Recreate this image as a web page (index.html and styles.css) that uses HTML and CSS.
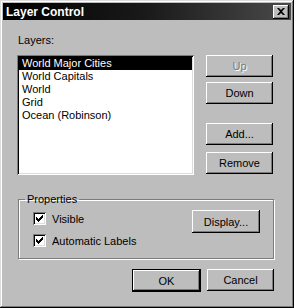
FILE: index.html
```html
<!DOCTYPE html>
<html lang="en">
<head>
    <meta charset="UTF-8">
    <title>Layer Control</title>
    <link rel="stylesheet" href="styles.css">
</head>
<body>
    <div class="window">
        <div class="titlebar">
            <span class="title">Layer Control</span>
            <button class="close" type="button">
                <svg width="8" height="7" viewBox="0 0 8 7"><path d="M0 0h2l2 2 2-2h2L5 3.5 8 7H6L4 5 2 7H0l3-3.5z" fill="#000"/></svg>
            </button>
        </div>

        <div class="content">
            <div class="label">Layers:</div>
            <div class="layers-row">
                <ul class="listbox">
                    <li class="selected">World Major Cities</li>
                    <li>World Capitals</li>
                    <li>World</li>
                    <li>Grid</li>
                    <li>Ocean (Robinson)</li>
                </ul>
                <div class="side-buttons">
                    <button class="btn" disabled>Up</button>
                    <button class="btn">Down</button>
                    <button class="btn add">Add...</button>
                    <button class="btn remove">Remove</button>
                </div>
            </div>

            <fieldset class="group">
                <legend>Properties</legend>
                <div class="group-body">
                    <div class="checks">
                        <label class="check"><span class="box"><svg width="7" height="7" viewBox="0 0 7 7"><path d="M0 2h1v1h1v1h1V3h1V2h1V1h1V0h1v3H6v1H5v1H4v1H3v1H2V6H1V5H0z" fill="#000"/></svg></span>Visible</label>
                        <label class="check"><span class="box"><svg width="7" height="7" viewBox="0 0 7 7"><path d="M0 2h1v1h1v1h1V3h1V2h1V1h1V0h1v3H6v1H5v1H4v1H3v1H2V6H1V5H0z" fill="#000"/></svg></span>Automatic Labels</label>
                    </div>
                    <button class="btn display">Display...</button>
                </div>
            </fieldset>

            <div class="footer">
                <button class="btn default">OK</button>
                <button class="btn">Cancel</button>
            </div>
        </div>
    </div>
</body>
</html>
```

FILE: styles.css
```css
body {
    margin: 0;
    background: #bdbdbd;
    font-family: 'Liberation Sans', Arial, sans-serif;
    font-size: 11px;
    color: #000;
}
.window {
    width: 294px;
    height: 308px;
    box-sizing: border-box;
    background: #bdbdbd;
    padding: 3px;
    box-shadow: inset -1px -1px #000, inset 1px 1px #dcdcdc,
                inset -2px -2px #7b7b7b, inset 2px 2px #fff;
}
.titlebar {
    height: 17px;
    background: linear-gradient(to right, #000 0%, #1a1a1a 50%, #4a4a4a 100%);
    display: flex;
    align-items: center;
    justify-content: space-between;
    padding: 0 2px 0 3px;
}
.title {
    color: #fff;
    font-weight: bold;
    font-size: 12px;
}
.close {
    width: 16px;
    height: 14px;
    padding: 0;
    border: none;
    background: #bdbdbd;
    display: flex;
    align-items: center;
    justify-content: center;
    box-shadow: inset -1px -1px #000, inset 1px 1px #fff, inset -2px -2px #7b7b7b;
}
.content {
    padding: 14px 17px 0 14px;
}
.label {
    height: 21px;
    padding-left: 1px;
}
.layers-row {
    display: flex;
    gap: 12px;
}
.listbox {
    list-style: none;
    margin: 0;
    width: 177px;
    height: 120px;
    box-sizing: border-box;
    padding: 2px;
    background: #fff;
    box-shadow: inset 1px 1px #7b7b7b, inset -1px -1px #fff,
                inset 2px 2px #000, inset -2px -2px #dcdcdc;
}
.listbox li {
    height: 13px;
    line-height: 13px;
    padding-left: 3px;
}
.listbox li.selected {
    background: #000;
    color: #fff;
}
.side-buttons {
    display: flex;
    flex-direction: column;
    gap: 5px;
}
.btn {
    width: 67px;
    height: 22px;
    padding: 0;
    border: none;
    background: #bdbdbd;
    font: inherit;
    color: #000;
    box-shadow: inset -1px -1px #000, inset 1px 1px #fff, inset -2px -2px #7b7b7b;
}
.btn:disabled {
    color: #7b7b7b;
    text-shadow: 1px 1px #fff;
}
.btn.add {
    margin-top: 14px;
}
.btn.remove {
    margin-top: 2px;
}
.group {
    margin: 18px 0 0 1px;
    padding: 0;
    height: 66px;
    box-sizing: border-box;
    border: 1px solid #7b7b7b;
    box-shadow: 1px 1px #fff, inset 1px 1px #fff;
}
.group legend {
    margin-left: 6px;
    padding: 0 2px;
}
.group-body {
    display: flex;
    justify-content: space-between;
    padding: 7px 13px 0 14px;
}
.checks {
    display: flex;
    flex-direction: column;
    gap: 9px;
}
.check {
    display: flex;
    align-items: center;
    gap: 6px;
}
.box {
    width: 13px;
    height: 13px;
    box-sizing: border-box;
    background: #fff;
    display: flex;
    align-items: center;
    justify-content: center;
    box-shadow: inset 1px 1px #7b7b7b, inset -1px -1px #fff,
                inset 2px 2px #000, inset -2px -2px #dcdcdc;
}
.display {
    width: 68px;
    height: 23px;
    margin-top: -2px;
}
.footer {
    display: flex;
    justify-content: flex-end;
    gap: 6px;
    margin-top: 10px;
}
.btn.default {
    width: 69px;
    height: 23px;
    box-shadow: inset 0 0 0 1px #000, inset -2px -2px #000, inset 2px 2px #fff, inset -3px -3px #7b7b7b;
}
```
